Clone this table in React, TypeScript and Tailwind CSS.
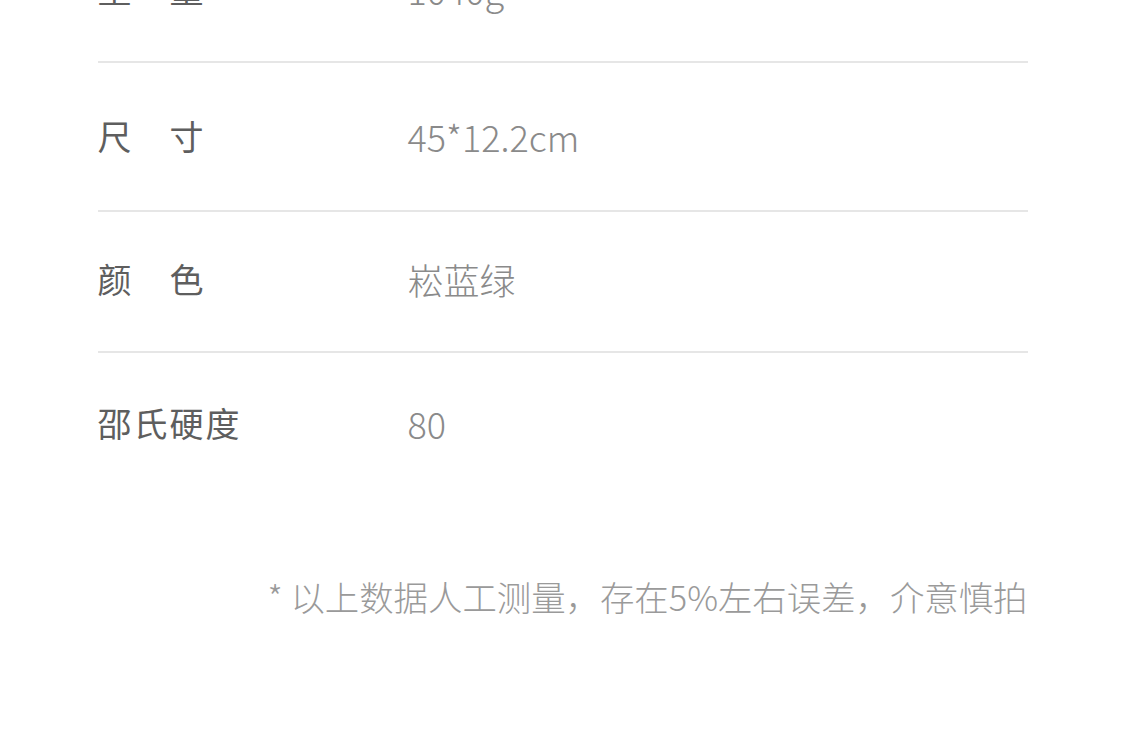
import React from 'react';

interface SpecRow {
  label: string;
  value: string;
  height: string;
  shift: string;
}

const rows: SpecRow[] = [
  { label: '重　量', value: '1040g', height: 'h-[145px]', shift: '' },
  { label: '尺　寸', value: '45*12.2cm', height: 'h-[147px]', shift: 'pb-[1px]' },
  { label: '颜　色', value: '崧蓝绿', height: 'h-[139px]', shift: 'pb-[5px]' },
  { label: '邵氏硬度', value: '80', height: 'h-[142px]', shift: 'pb-[2px]' },
];

const App: React.FC = () => {
  return (
    <div className="min-h-[756px] bg-white overflow-hidden" style={{ fontFamily: '"Noto Sans CJK SC", "Noto Sans", sans-serif' }}>
      <div className="mx-auto w-[930px] -mt-[84px]">
        {rows.map((row, idx) => (
          <div key={idx}>
            <div className={`flex items-center ${row.height} ${row.shift}`}>
              <div className="w-[310px] shrink-0 text-[34px] font-normal tracking-[2px] text-[#5e5e5e] leading-none">{row.label}</div>
              <div className="text-[36px] font-light text-[#8a8a8a] leading-none">{row.value}</div>
            </div>
            {idx < rows.length - 1 && <div className="h-[2px] bg-[#e6e6e6]"></div>}
          </div>
        ))}

        <div className="mt-[84px] text-right text-[34.4px] font-light text-[#9a9a9a] leading-none">
          * 以上数据人工测量，存在5%左右误差，介意慎拍
        </div>
      </div>
    </div>
  );
};

export default App;
